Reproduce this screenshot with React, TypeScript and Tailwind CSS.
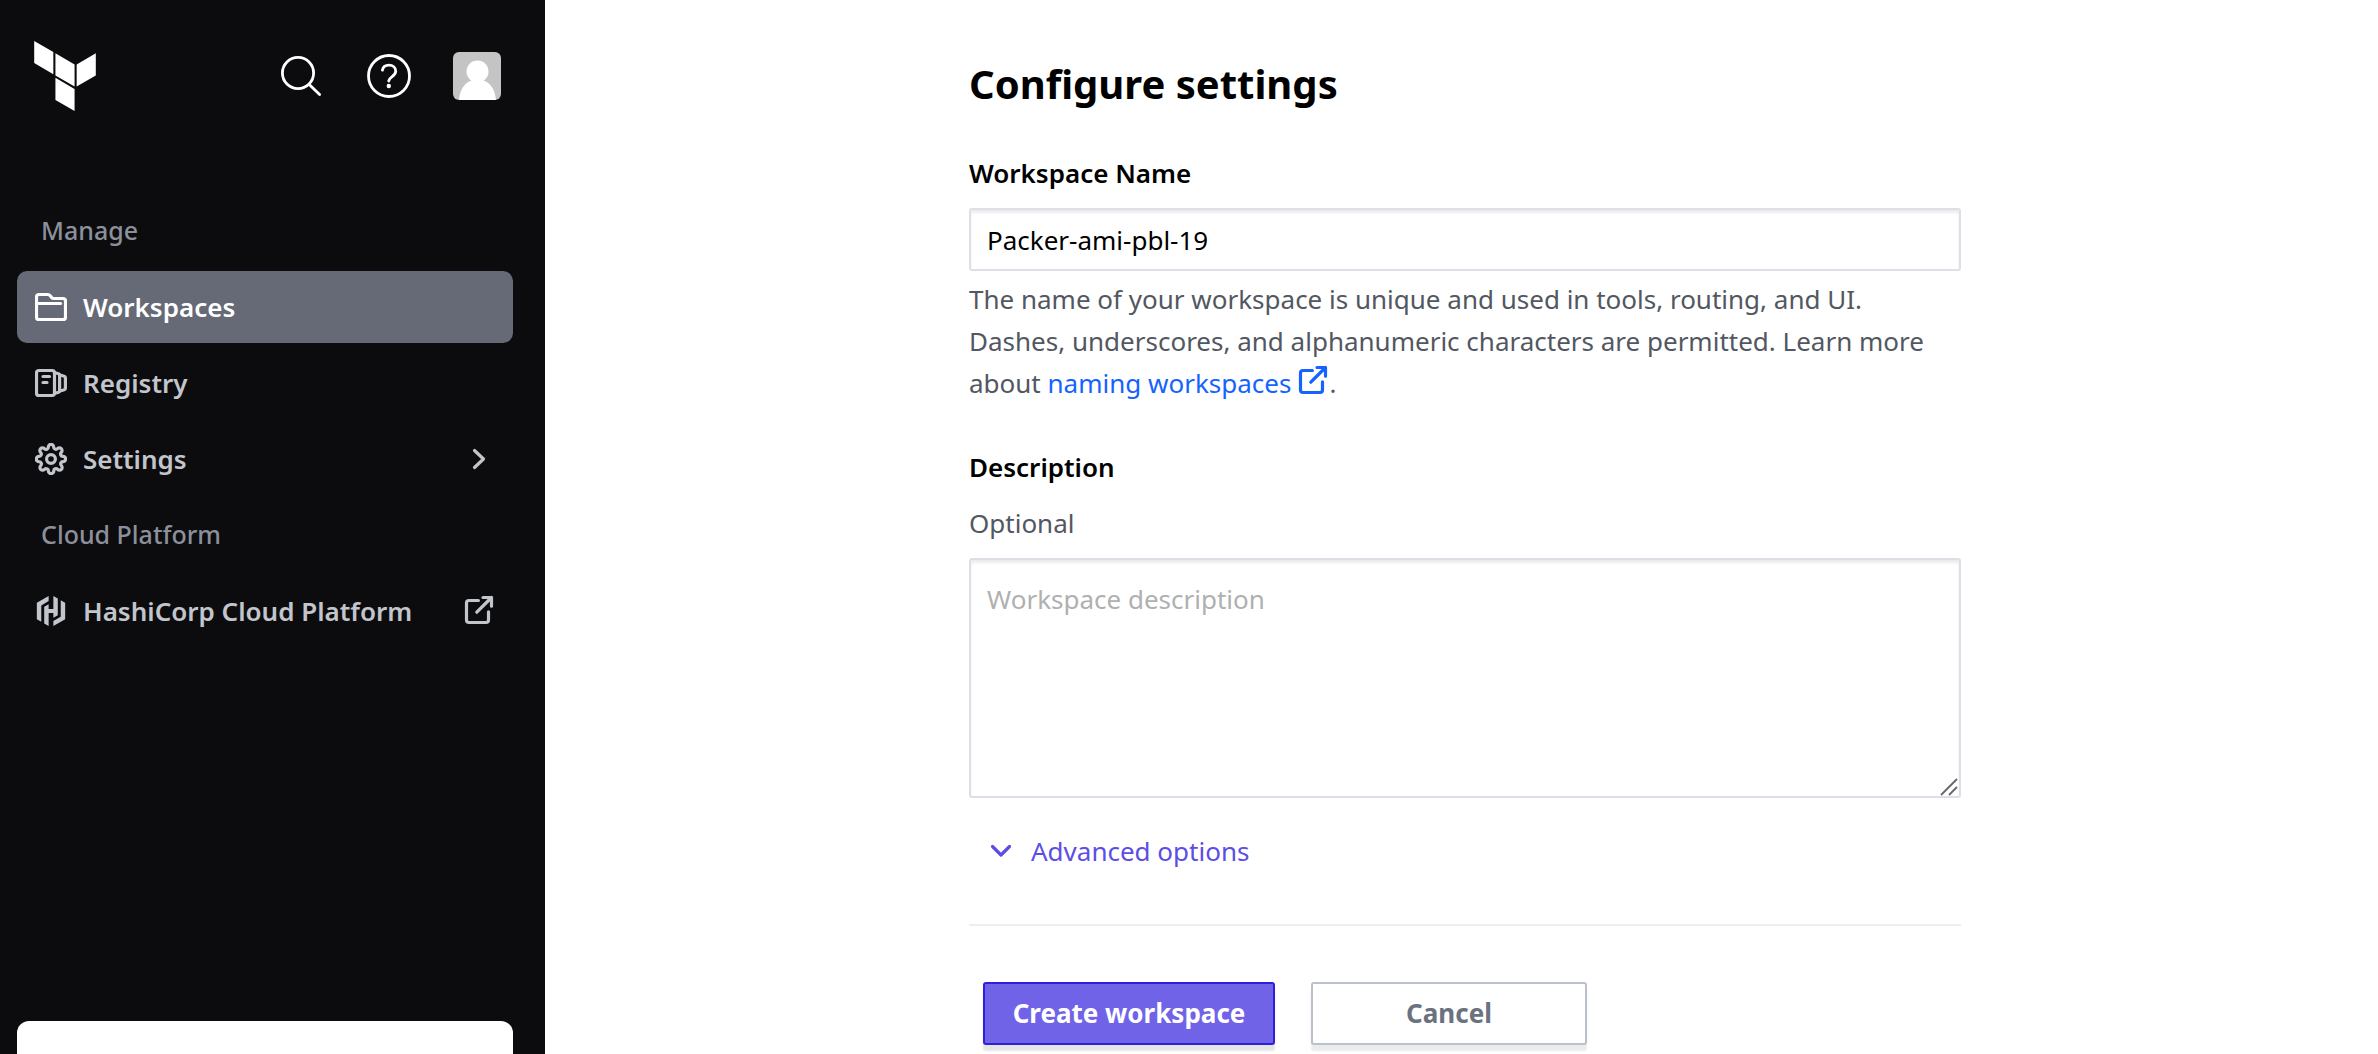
import type { ReactNode } from "react";
import { SiHashicorp } from "react-icons/si";

function Glyph({ children, className = "size-8" }: { children: ReactNode; className?: string }) {
  return (
    <svg
      viewBox="0 0 16 16"
      className={`${className} shrink-0`}
      fill="none"
      stroke="currentColor"
      strokeWidth="1.6"
      strokeLinecap="round"
      strokeLinejoin="round"
      aria-hidden="true"
    >
      {children}
    </svg>
  );
}

function ExternalIcon({ className }: { className?: string }) {
  return (
    <Glyph className={className}>
      <path d="M7.7 2.75H3C2.3 2.75 1.75 3.3 1.75 4v8.5c0 .7.55 1.25 1.25 1.25h8.5c.7 0 1.25-.55 1.25-1.25V8.4" />
      <path d="M10 1.25h4.25V5.6M14.25 1.25 6.9 8.6" />
    </Glyph>
  );
}

function FolderIcon() {
  return (
    <Glyph>
      <path d="M.75 13V3c0-.7.55-1.25 1.25-1.25h4.5c.4 0 .75.2 1 .5l.9 1.1c.25.3.6.4 1 .4H14c.7 0 1.25.55 1.25 1.25v8c0 .7-.55 1.25-1.25 1.25H2c-.7 0-1.25-.55-1.25-1.25Z" />
      <path d="M1 6.25h11.75" />
    </Glyph>
  );
}

function RegistryIcon() {
  return (
    <Glyph>
      <rect x=".75" y="1.75" width="9" height="12.5" rx="1.25" />
      <path d="M4 4.75h3.25M4 7.75h2" />
      <path d="m10 2.9 1.8.5c.3.1.5.3.5.6v8c0 .3-.2.5-.5.6l-1.8.5" />
      <path d="m12.3 4 2 .5c.5.1.9.5.9 1v5c0 .5-.4.9-.9 1l-2 .5" />
    </Glyph>
  );
}

function GearIcon() {
  return (
    <svg
      viewBox="0 0 24 24"
      className="size-8 shrink-0"
      fill="none"
      stroke="currentColor"
      strokeWidth="2.4"
      strokeLinecap="round"
      strokeLinejoin="round"
      aria-hidden="true"
    >
      <circle cx="12" cy="12" r="3.3" />
      <path d="M19.4 15a1.65 1.65 0 0 0 .33 1.82l.06.06a2 2 0 0 1 0 2.83 2 2 0 0 1-2.83 0l-.06-.06a1.65 1.65 0 0 0-1.82-.33 1.65 1.65 0 0 0-1 1.51V21a2 2 0 0 1-2 2 2 2 0 0 1-2-2v-.09A1.65 1.65 0 0 0 9 19.4a1.65 1.65 0 0 0-1.82.33l-.06.06a2 2 0 0 1-2.83 0 2 2 0 0 1 0-2.83l.06-.06a1.65 1.65 0 0 0 .33-1.82 1.65 1.65 0 0 0-1.51-1H3a2 2 0 0 1-2-2 2 2 0 0 1 2-2h.09A1.65 1.65 0 0 0 4.6 9a1.65 1.65 0 0 0-.33-1.82l-.06-.06a2 2 0 0 1 0-2.83 2 2 0 0 1 2.83 0l.06.06a1.65 1.65 0 0 0 1.82.33H9a1.65 1.65 0 0 0 1-1.51V3a2 2 0 0 1 2-2 2 2 0 0 1 2 2v.09a1.65 1.65 0 0 0 1 1.51 1.65 1.65 0 0 0 1.82-.33l.06-.06a2 2 0 0 1 2.83 0 2 2 0 0 1 0 2.83l-.06.06a1.65 1.65 0 0 0-.33 1.82V9a1.65 1.65 0 0 0 1.51 1H21a2 2 0 0 1 2 2 2 2 0 0 1-2 2h-.09a1.65 1.65 0 0 0-1.51 1z" />
    </svg>
  );
}

function NavItem({
  icon,
  label,
  trailing,
  active = false,
}: {
  icon: ReactNode;
  label: string;
  trailing?: ReactNode;
  active?: boolean;
}) {
  return (
    <li>
      <a
        href="#"
        aria-current={active ? "page" : undefined}
        className={`flex h-18 items-center rounded-[10px] px-[18px] text-[26px] font-semibold ${
          active ? "bg-[#656a76] text-white" : "text-[#c2c5cb]"
        }`}
      >
        {icon}
        <span className="ml-4 flex-1 whitespace-nowrap">{label}</span>
        {trailing}
      </a>
    </li>
  );
}

function NavHeading({ children }: { children: ReactNode }) {
  return <li className="flex h-18 items-center px-6 text-[25px] font-medium text-[#8c909c]">{children}</li>;
}

function Sidebar() {
  return (
    <aside className="flex w-[545px] shrink-0 flex-col bg-[#0c0c0e]">
      <div className="flex items-center pt-[41px] pr-[44px] pl-[34px]">
        <a href="#" aria-label="Terraform Cloud home">
          <svg viewBox="1.44 0 21.12 24" className="h-[70px] w-[62px] fill-white" aria-hidden="true">
            <path d="M1.44 0v7.575l6.561 3.79V3.787zm21.12 4.227-6.561 3.791v7.574l6.56-3.787zM8.72 4.23v7.575l6.561 3.787V8.018zm0 8.405v7.575L15.28 24v-7.578z" />
          </svg>
        </a>
        <div className="ml-auto flex items-center gap-[42px] text-white">
          <button type="button" aria-label="Search">
            <svg viewBox="0 0 44 44" className="size-11" fill="none" stroke="currentColor" strokeWidth="2.8" strokeLinecap="round" aria-hidden="true">
              <circle cx="17" cy="19" r="15.6" />
              <path d="m28.2 30.4 10.4 10.2" />
            </svg>
          </button>
          <button type="button" aria-label="Help">
            <svg viewBox="0 0 44 44" className="size-11" fill="none" stroke="currentColor" strokeWidth="2.8" strokeLinecap="round" strokeLinejoin="round" aria-hidden="true">
              <circle cx="22" cy="22" r="20.5" />
              <path d="M15.400 16.200c.5-3 3.200-5 6.600-5 3.800 0 6.700 2.500 6.700 6 0 5.200-6.500 5.200-7 9.800" />
              <circle cx="21.800" cy="32" r="2.200" fill="currentColor" stroke="none" />
            </svg>
          </button>
          <button type="button" aria-label="Account" className="overflow-hidden rounded-md bg-[#c4c4c4]">
            <svg viewBox="0 0 48 48" className="size-12 fill-white" aria-hidden="true">
              <circle cx="24.500" cy="19.500" r="11" />
              <path d="M6 48c1-11 6-17.500 12.500-19.500V26h12v2.500C37 30.500 42 37 43 48Z" />
            </svg>
          </button>
        </div>
      </div>

      <nav aria-label="Main" className="mt-[84px] pr-8 pl-[17px]">
        <ul className="flex flex-col gap-1">
          <NavHeading>Manage</NavHeading>
          <NavItem active icon={<FolderIcon />} label="Workspaces" />
          <NavItem icon={<RegistryIcon />} label="Registry" />
          <NavItem
            icon={<GearIcon />}
            label="Settings"
            trailing={
              <Glyph>
                <path d="M5.75 3.75 10.250 8l-4.500 4.250" />
              </Glyph>
            }
          />
          <NavHeading>Cloud Platform</NavHeading>
          <NavItem
            icon={
              <span className="flex size-8 items-center justify-center">
                <SiHashicorp className="size-[30px]" aria-hidden="true" />
              </span>
            }
            label="HashiCorp Cloud Platform"
            trailing={<ExternalIcon />}
          />
        </ul>
      </nav>

      <div className="mt-auto mr-8 ml-[17px] h-[33px] rounded-t-xl bg-white" />
    </aside>
  );
}

function SettingsForm() {
  const field =
    "block w-full rounded-[3px] border-2 border-[#dce0e6] bg-white px-4 text-[26px] shadow-[inset_0_3px_3px_rgba(0,0,0,0.08)] outline-none";
  return (
    <form className="w-full max-w-[992px] pt-14" onSubmit={(e) => e.preventDefault()}>
      <h1 className="text-[40px] leading-14 font-bold">Configure settings</h1>

      <label htmlFor="ws-name" className="mt-10 block text-[26px] leading-[42px] font-semibold">
        Workspace Name
      </label>
      <input id="ws-name" type="text" defaultValue="Packer-ami-pbl-19" className={`${field} mt-[14px] h-[63px]`} />
      <p className="mt-[7px] text-[26px] leading-[42px] text-[#525761]">
        The name of your workspace is unique and used in tools, routing, and UI. Dashes, underscores, and alphanumeric
        characters are permitted. Learn more about{" "}
        <a href="#" className="text-[#1563ff]">
          naming workspaces
          <ExternalIcon className="ml-1.5 inline size-8 align-[-4px]" />
        </a>
        .
      </p>

      <label htmlFor="ws-desc" className="mt-[42px] block text-[26px] leading-[42px] font-semibold">
        Description
      </label>
      <p id="ws-desc-hint" className="mt-[14px] text-[26px] leading-[42px] text-[#525761]">
        Optional
      </p>
      <div className="relative mt-[14px]">
        <textarea
          id="ws-desc"
          aria-describedby="ws-desc-hint"
          placeholder="Workspace description"
          className={`${field} h-60 resize-none py-[18px] leading-[42px] placeholder:text-[#b0b0b0]`}
        />
        <svg
          viewBox="0 0 18 18"
          className="pointer-events-none absolute right-[3px] bottom-[2px] size-[18px]"
          stroke="#666666"
          strokeWidth="1.8"
          aria-hidden="true"
        >
          <path d="M1 17 17 1M9 17l8-8" />
        </svg>
      </div>

      <button type="button" className="mt-[32px] ml-4 flex items-center text-[26px] leading-[42px] text-[#5c4ee5]">
        <Glyph>
          <path d="M3.750 5.750 8 10l4.250-4.250" />
        </Glyph>
        <span className="ml-[14px]">Advanced options</span>
      </button>

      <hr className="mt-[52px] border-t-2 border-[#ebeef2]" />

      <div className="mt-14 flex gap-9 pb-[9px] pl-[14px]">
        <button
          type="submit"
          className="h-[63px] w-[292px] rounded-[3px] border-2 border-[#2e20d8] bg-[#7063e8] text-[26px] font-bold text-white shadow-[0_6px_2px_rgba(0,0,0,0.1)]"
        >
          Create workspace
        </button>
        <button
          type="button"
          className="h-[63px] w-[276px] rounded-[3px] border-2 border-[#bac1cc] bg-white text-[26px] font-bold text-[#6a7280] shadow-[0_6px_2px_rgba(0,0,0,0.08)]"
        >
          Cancel
        </button>
      </div>
    </form>
  );
}

export default function App() {
  return (
    <div className="flex min-h-screen bg-white font-['Noto_Sans',sans-serif] text-black">
      <Sidebar />
      <main className="flex min-w-0 flex-1 justify-center pl-[7px]">
        <SettingsForm />
      </main>
    </div>
  );
}
